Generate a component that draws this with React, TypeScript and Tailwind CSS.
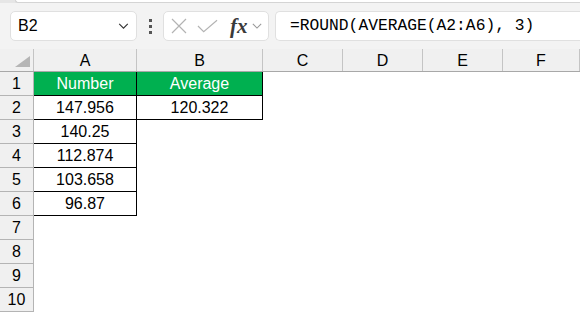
const cols = [
  { name: 'A', w: 'w-[103px]' },
  { name: 'B', w: 'w-[126px]' },
  { name: 'C', w: 'w-[80px]' },
  { name: 'D', w: 'w-[80px]' },
  { name: 'E', w: 'w-[80px]' },
  { name: 'F', w: 'flex-1' },
]

const numbers = ['147.956', '140.25', '112.874', '103.658', '96.87']

function Chevron({ className }: { className: string }) {
  return (
    <svg viewBox="0 0 12 7" className={className} fill="none" stroke="currentColor" strokeWidth="1.3">
      <path d="M1 1l5 5 5-5" />
    </svg>
  )
}

export default function App() {
  const rows = Array.from({ length: 10 }, (_, i) => i + 1)

  return (
    <div className="w-[580px] h-[313px] overflow-hidden bg-white text-black" style={{ fontFamily: '"Liberation Sans", Arial, sans-serif' }}>
      {/* ribbon edge */}
      <div className="h-[3px] bg-[#e6e6e6] pl-[15px]">
        <div className="h-[3px] bg-white border-b border-l border-[#d4d4d4] rounded-bl-[4px]" />
      </div>

      {/* formula bar */}
      <div className="h-[46px] bg-[#f3f3f3] flex items-start pt-[8px] pl-[10px]">
        <div className="w-[127px] h-[30px] bg-white border border-[#e0e0e0] rounded-[5px] flex items-center pl-[7px] pr-[7px]">
          <span className="text-[16px] leading-none">B2</span>
          <Chevron className="ml-auto w-[11px] h-[6px] text-[#333]" />
        </div>
        <div className="w-[26px] h-[30px] flex flex-col items-center justify-center gap-[3px]">
          <span className="w-[3px] h-[3px] bg-[#555]" />
          <span className="w-[3px] h-[3px] bg-[#555]" />
          <span className="w-[3px] h-[3px] bg-[#555]" />
        </div>
        <div className="w-[106px] h-[30px] bg-white border border-[#e0e0e0] rounded-[5px] flex items-center pl-[7px]">
          <svg viewBox="0 0 16 16" className="w-[16px] h-[16px] text-[#b3b3b3]" fill="none" stroke="currentColor" strokeWidth="1.2">
            <path d="M1 1l14 14M15 1L1 15" />
          </svg>
          <svg viewBox="0 0 22 14" className="ml-[10px] w-[21px] h-[14px] text-[#b3b3b3]" fill="none" stroke="currentColor" strokeWidth="1.2">
            <path d="M1 7l6 6L21 1" />
          </svg>
          <span className="ml-[12px] text-[21px] leading-none italic font-semibold text-[#3a3a3a]" style={{ fontFamily: '"Liberation Serif", "Times New Roman", serif' }}>
            fx
          </span>
          <Chevron className="ml-[4px] w-[10px] h-[6px] text-[#999]" />
        </div>
        <div className="ml-[6px] flex-1 h-[30px] bg-white border border-r-0 border-[#e0e0e0] rounded-l-[5px] flex items-center pl-[14px]">
          <span className="text-[16.3px] leading-none" style={{ fontFamily: '"Liberation Mono", "Courier New", monospace' }}>
            =ROUND(AVERAGE(A2:A6), 3)
          </span>
        </div>
      </div>

      {/* column header */}
      <div className="flex h-[23px] bg-[#f0f0f0] border-b border-[#a8a8a8]">
        <div className="w-[34px] border-r border-[#c4c4c4] flex items-end justify-end pr-[3px] pb-[4px]">
          <svg viewBox="0 0 15 11" className="w-[15px] h-[11px]">
            <path d="M15 0V11H0Z" fill="#b5b5b5" />
          </svg>
        </div>
        {cols.map((c) => (
          <div key={c.name} className={`${c.w} border-r border-[#c4c4c4] flex items-center justify-center pt-[1px] text-[16px] leading-none`}>
            {c.name}
          </div>
        ))}
      </div>

      {/* rows */}
      {rows.map((r) => (
        <div key={r} className="flex h-[24px]">
          <div className="w-[34px] bg-[#f0f0f0] border-r border-b border-[#b4b4b4] flex items-center justify-center pt-[1px] text-[16px] leading-none">
            {r}
          </div>
          {r === 1 && (
            <>
              <div className="w-[103px] bg-[#00b050] text-white border-r border-b border-black flex items-center justify-center pt-[1px] text-[16px] leading-none">
                Number
              </div>
              <div className="w-[126px] bg-[#00b050] text-white border-r border-b border-black flex items-center justify-center pt-[1px] text-[16px] leading-none">
                Average
              </div>
            </>
          )}
          {r >= 2 && r <= 6 && (
            <div className="w-[103px] border-r border-b border-black flex items-center justify-center pt-[1px] text-[16px] leading-none">
              {numbers[r - 2]}
            </div>
          )}
          {r === 2 && (
            <div className="w-[126px] border-r border-b border-black flex items-center justify-center pt-[1px] text-[16px] leading-none">
              120.322
            </div>
          )}
          <div className="flex-1" />
        </div>
      ))}
    </div>
  )
}
